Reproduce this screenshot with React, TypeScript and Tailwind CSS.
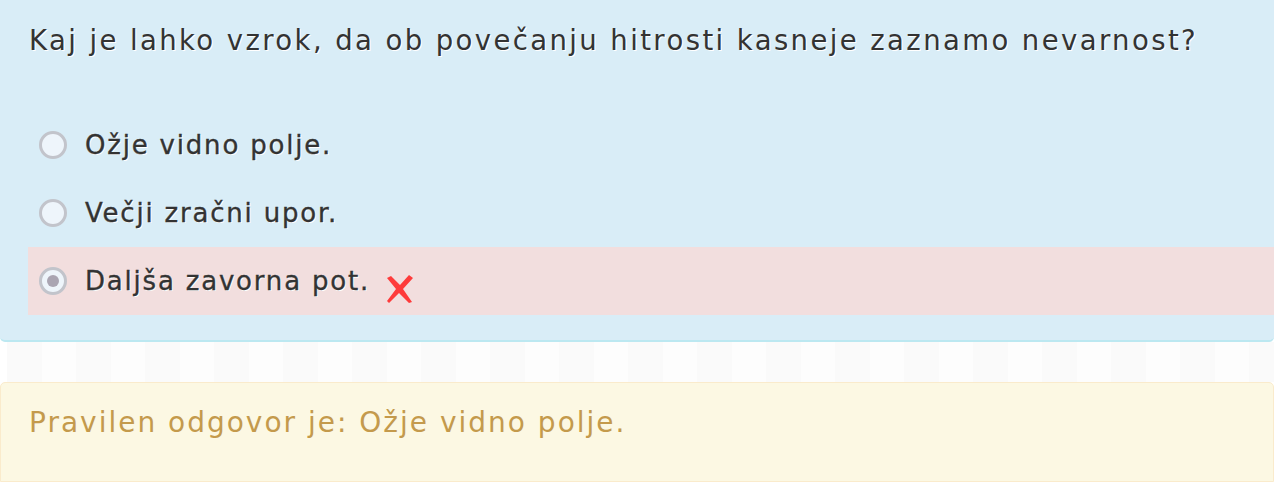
import React from "react";

const font = { fontFamily: '"DejaVu Sans", "Liberation Sans", sans-serif' };

function Radio({ checked }: { checked?: boolean }) {
  return (
    <span className="flex h-[28px] w-[28px] shrink-0 items-center justify-center rounded-full border-[3px] border-[#c2c4cb] bg-[#eef5fb]">
      {checked && <span className="h-[12px] w-[12px] rounded-full bg-[#aaa5b2]" />}
    </span>
  );
}

function RedX() {
  return (
    <svg width="30" height="30" viewBox="0 0 30 30" className="ml-[15px] mt-[16px]">
      <path d="M2 4 L6 2 L15 11 L24 1 L28 4 L18 15 L27 28 L24 29 L14 19 L4 29 L2 27 L11 15 Z" fill="#fe3b3b" />
    </svg>
  );
}

const options = [
  { text: "Ožje vidno polje.", checked: false, wrong: false },
  { text: "Večji zračni upor.", checked: false, wrong: false },
  { text: "Daljša zavorna pot.", checked: true, wrong: true },
];

export default function App() {
  const blocks = Array.from({ length: 38 });
  return (
    <div className="w-[1274px] h-[482px] overflow-hidden bg-white" style={font}>
      <div className="rounded-b-[5px] border-b-2 border-[#bce8f1] bg-[#d9edf7] pt-[20px] pb-[25px]">
        <div className="whitespace-nowrap pl-[29px] text-[27.5px] leading-[40px] tracking-[2.4px] text-[#333333] [text-shadow:1px_1px_0_#ffffff]">
          Kaj je lahko vzrok, da ob povečanju hitrosti kasneje zaznamo nevarnost?
        </div>
        <div className="ml-[28px] mt-[51px] flex flex-col">
          {options.map((o) => (
            <div
              key={o.text}
              className={`flex h-[68px] items-center pl-[11px] ${o.wrong ? "bg-[#f2dede]" : ""}`}
            >
              <Radio checked={o.checked} />
              <span className="ml-[18px] text-[26px] tracking-[1.8px] text-[#333333] [-webkit-text-stroke:0.35px_#333333] [text-shadow:1px_1px_0_#ffffff]">
                {o.text}
              </span>
              {o.wrong && <RedX />}
            </div>
          ))}
        </div>
      </div>
      <div className="flex h-[40px] pl-[7px]">
        {blocks.map((_, i) => (
          <div key={i} className={`h-full w-[34.5px] shrink-0 ${i % 2 === 0 ? "bg-[#fafafa]" : "bg-[#fdfdfd]"}`} />
        ))}
      </div>
      <div className="h-[100px] rounded-t-[5px] border border-[#faebcc] bg-[#fcf8e3] pl-[28px] pt-[20px]">
        <div className="whitespace-nowrap text-[28px] leading-[40px] tracking-[2px] text-[#c49a4c]">
          Pravilen odgovor je: Ožje vidno polje.
        </div>
      </div>
    </div>
  );
}
